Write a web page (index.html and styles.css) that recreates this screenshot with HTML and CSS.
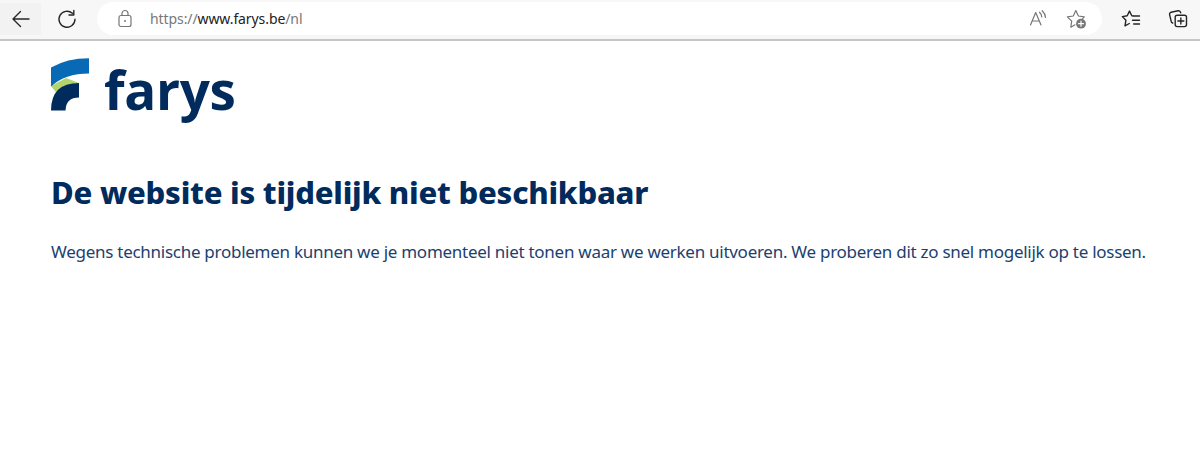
FILE: index.html
```html
<!DOCTYPE html>
<html lang="nl">
<head>
<meta charset="utf-8">
<title>farys</title>
<link rel="stylesheet" href="styles.css">
</head>
<body>
<header class="toolbar">
  <div class="back"><svg class="icon" width="20" height="20" viewBox="0 0 20 20"><path d="M18 10H2M9.500 2.500 2 10l7.500 7.500"/></svg></div>
  <svg class="icon reload" width="20" height="20" viewBox="0 0 20 20"><path d="M18 10.200A8 8 0 1 1 15.400 4.300M16.800 1.500V6H12"/></svg>
  <div class="address">
    <svg class="icon muted lock" width="16" height="20" viewBox="0 0 16 20"><rect x="2" y="6.500" width="12" height="11" rx="2"/><path d="M5 6.500V4.500a3 3 0 0 1 6 0v2"/><circle class="solid" cx="8" cy="12" r="1"/></svg>
    <div class="url">https://<span class="host">www.farys.be</span>/nl</div>
    <svg class="icon muted read" width="20" height="20" viewBox="0 0 20 20"><path d="M2.500 16 7.700 3.500 13 16M4.300 12h6.900M11.500 3.200q2.200 1.800 2.300 4.800M14.200 1.700q3 2.800 3.300 6.800"/></svg>
    <svg class="icon muted star" width="22" height="22" viewBox="0 0 22 22"><path d="M9 16.800 4.800 19.200l.900-6-4.300-4.300 5.900-.900L9.800 2.600l2.600 5.400 5.900.900-1.700 1.700"/><circle class="solid" cx="15" cy="15.700" r="4.900"/><path class="plus" d="M12.500 15.700h5M15 13.200v5"/></svg>
  </div>
  <svg class="icon favorites" width="20" height="20" viewBox="0 0 20 20"><path d="M12.500 7 10.800 6.700 8.500 2.100 6.200 6.800l-4.900.800 3.600 3.600-.9 5.600 4.300-2.300M12.700 7h5.800M11.500 11.200h7M12.700 15h5.800"/></svg>
  <svg class="icon collections" width="20" height="20" viewBox="0 0 20 20"><rect x="7.200" y="6.300" width="11.300" height="11.300" rx="2"/><path d="M12.850 9v6M9.850 12h6M4.700 14a2 2 0 0 1-1.500-1.600L1.600 5.700a2 2 0 0 1 1.500-2.400l7-1.500a2 2 0 0 1 2.400 1.500l.2.600"/></svg>
</header>
<main class="page">
  <div class="logo">
    <svg class="mark" width="38" height="54" viewBox="0 0 38 54"><path fill="#b2d56d" d="M0 28 15 20 28 25Q14 26 5.500 35Z"/><path fill="#0869b5" d="M0 9.500Q16 .2 38 .2V15.500Q14 15.500 0 28.500Z"/><path fill="#002b5c" d="M0 52.500Q0 25 28 25V39.500Q15 39.500 14.500 52.500Z"/></svg>
    <span class="wordmark">farys</span>
  </div>
  <h1 class="title">De website is tijdelijk niet beschikbaar</h1>
  <p class="message">Wegens technische problemen kunnen we je momenteel niet tonen waar we werken uitvoeren. We proberen dit zo snel mogelijk op te lossen.</p>
</main>
</body>
</html>
```
FILE: styles.css
```css
body { margin: 0; background: #fff; color: #002b5c; font-family: "Noto Sans", sans-serif; }
.toolbar { display: flex; align-items: center; box-sizing: border-box; height: 41px; padding-bottom: 2px; background: #f7f7f7; border-bottom: 2px solid #c6c6c6; }
.back { display: flex; align-items: center; justify-content: center; width: 41px; height: 32px; background: #f2f2f2; }
.icon { flex: none; fill: none; stroke: #262626; stroke-width: 1.4; stroke-linecap: round; stroke-linejoin: round; }
.muted { stroke: #777; stroke-width: 1.2; }
.muted .solid { fill: #777; stroke: none; }
.muted .plus { stroke: #fff; }
.reload { margin-left: 16px; }
.address { display: flex; align-items: center; box-sizing: border-box; width: 1005px; height: 33px; margin-left: 20px; padding: 0 14px 0 20px; border-radius: 17px; background: #fff; }
.url { flex: 1; margin-left: 17px; color: #777; font-size: 14px; line-height: 20px; letter-spacing: -0.09px; white-space: nowrap; }
.host { color: #222; }
.star { margin-left: 18px; }
.favorites { margin-left: 19px; }
.collections { margin-left: 27px; }
.page { padding: 17px 0 0 51px; }
.logo { display: flex; height: 70px; }
.mark { flex: none; }
.wordmark { margin-left: 15px; font-family: "Open Sans", sans-serif; font-size: 53px; line-height: 64px; font-weight: 700; letter-spacing: -0.3px; }
.title { margin: 42px 0 0; font-size: 31px; line-height: 44px; font-weight: 800; letter-spacing: -0.23px; white-space: nowrap; }
.message { margin: 25px 0 0; color: #1b4170; font-size: 17px; line-height: 26px; letter-spacing: -0.272px; white-space: nowrap; }
```
